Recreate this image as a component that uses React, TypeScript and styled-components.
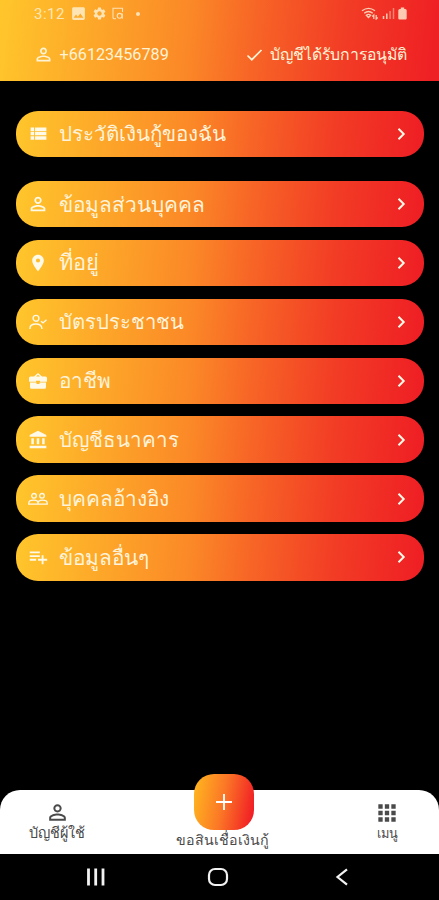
import React from "react";
import styled, { createGlobalStyle } from "styled-components";
import {
  MdAccountBalance,
  MdApps,
  MdImage,
  MdPersonOutline,
  MdPlace,
  MdPlaylistAdd,
  MdSettings,
  MdViewList,
} from "react-icons/md";

const gradient = "linear-gradient(96deg, #ffc62b 0%, #fb8827 43%, #f76426 58%, #f23c25 78%, #ef2024 98%)";

const GlobalStyle = createGlobalStyle`
  *, *::before, *::after { box-sizing: border-box; }
  html, body { margin: 0; background: #000; }
  body { font-family: Roboto, sans-serif; }
  svg { display: block; flex: none; }
`;

const Screen = styled.div`
  width: 439px;
  height: 900px;
  display: flex;
  flex-direction: column;
  overflow: hidden;
  background: #000;
`;

const Header = styled.header`
  height: 81px;
  background: ${gradient};
  color: #fff3d6;
`;

const StatusBar = styled.div`
  height: 27px;
  padding: 0 32px 0 34px;
  display: flex;
  align-items: center;
  justify-content: space-between;
  opacity: 0.8;
`;

const StatusGroup = styled.div<{ $gap: number }>`
  display: flex;
  align-items: center;
  gap: ${(p) => p.$gap}px;
`;

const Clock = styled.span`
  width: 31px;
  font-size: 15px;
  line-height: 18px;
  letter-spacing: 0.5px;
  white-space: nowrap;
`;

const Dot = styled.span`
  width: 4px;
  height: 4px;
  margin-left: 7px;
  border-radius: 50%;
  background: currentColor;
`;

const AccountBar = styled.div`
  height: 54px;
  padding: 1px 32px 0 33px;
  display: flex;
  align-items: center;
  justify-content: space-between;
`;

const AccountItem = styled.div<{ $size: number; $gap: number }>`
  display: flex;
  align-items: center;
  gap: ${(p) => p.$gap}px;
  font-size: ${(p) => p.$size}px;
  line-height: 22px;
  white-space: nowrap;
`;

const Content = styled.main`
  height: 692px;
  padding: 29.5px 15px 0 16px;
`;

const MenuGroup = styled.nav`
  display: grid;
  gap: 12.5px;
  margin-bottom: 24px;
`;

const MenuRow = styled.a`
  height: 46.4px;
  padding: 0 15px 0 12px;
  display: flex;
  align-items: center;
  border-radius: 22px;
  background: ${gradient};
  color: #fff9e8;
`;

const IconSlot = styled.span`
  width: 20px;
  display: flex;
  justify-content: center;
`;

const RowLabel = styled.span<{ $size: number }>`
  flex: 1;
  margin-left: 11px;
  padding-top: 1px;
  font-size: ${(p) => p.$size}px;
  line-height: 30px;
  color: #fff3d9;
  white-space: nowrap;
`;

const TabBar = styled.footer`
  height: 64px;
  margin-top: 16.5px;
  display: grid;
  grid-template-columns: 113px 1fr 104px;
  border-radius: 20px 20px 0 0;
  background: #fff;
  color: #4a4a4a;
`;

const Tab = styled.div`
  padding-top: 10px;
  display: flex;
  flex-direction: column;
  align-items: center;
`;

const UserTab = styled(Tab)`
  padding-left: 2px;
`;

const ActionTab = styled(Tab)`
  padding-top: 0;
  margin-top: -16px;
`;

const AddButton = styled.button`
  width: 60px;
  height: 56px;
  padding: 0;
  border: 0;
  border-radius: 20px;
  display: grid;
  place-items: center;
  background: linear-gradient(100deg, #ffb91f 0%, #fb7726 48%, #f11d25 95%);
  color: #fff;
`;

const TabLabel = styled.span<{ $size: number; $lift?: number; $pull?: number }>`
  margin-top: ${(p) => -(p.$lift ?? 0)}px;
  margin-right: ${(p) => p.$pull ?? 0}px;
  font-size: ${(p) => p.$size}px;
  line-height: 20px;
  white-space: nowrap;
`;

const SystemNav = styled.div`
  height: 46.5px;
  display: grid;
  grid-template-columns: 192px 52px 1fr;
  align-items: center;
  justify-items: center;
  padding-top: 1px;
  color: #f2f2f2;
`;

const Chevron = () => (
  <svg width="16" height="16" viewBox="0 0 16 16" fill="none" stroke="currentColor" strokeWidth="2">
    <path d="M5.5 2.8 10.7 8l-5.2 5.2" />
  </svg>
);

const CheckIcon = () => (
  <svg width="17" height="14" viewBox="0 0 16 14" fill="none" stroke="currentColor" strokeWidth="1.7">
    <path d="m1 7.5 4.3 4.2L15 2" />
  </svg>
);

const PersonCheckIcon = () => (
  <svg width="20" height="18" viewBox="0 0 20 18" fill="none" stroke="currentColor" strokeWidth="1.4">
    <circle cx="8" cy="5.3" r="2.9" />
    <path d="M2 16v-.7c0-2.800 2.500-4.300 6-4.300 3.300 0 5.600 1.500 5.900 4.300v.7M13 8.200l2 1.700 3.500-3.200" />
  </svg>
);

const PeopleIcon = () => (
  <svg width="20" height="16" viewBox="0 0 20 16" fill="none" stroke="currentColor" strokeWidth="1.3">
    <circle cx="6" cy="4.8" r="2.3" />
    <circle cx="14" cy="4.8" r="2.3" />
    <path d="M.8 13.200v-1.300C.8 10.100 3.200 9.200 5.700 9.200c2.100 0 4.300.8 4.300 2.700v1.300H.8ZM10 11.500c.4-1.500 2.100-2.300 4.200-2.300 2.500 0 5 .9 5 2.700v1.300H10" />
  </svg>
);

const BriefcaseIcon = () => (
  <svg width="20" height="18" viewBox="0 0 20 18">
    <path
      fill="currentColor"
      fillRule="evenodd"
      d="M6 4.500 10 1l4 3.500h3.500Q19 4.500 19 6v3.800h-7V8.800H8v1H1V6Q1 4.500 2.500 4.500H6Zm2 0h4L10 2.800 8 4.500ZM2 10.500h6.500V12h3v-1.500H18v4.700q0 1.500-1.500 1.500h-13q-1.500 0-1.500-1.500v-4.700Z"
    />
  </svg>
);

const DocumentIcon = () => (
  <svg width="12" height="13" viewBox="0 0 12 13" fill="none" stroke="currentColor" strokeWidth="1.1">
    <path d="M4 11.800H2.300Q1 11.800 1 10.500V1.200h9.500V5" />
    <circle cx="7.600" cy="8.800" r="2.400" />
    <path d="M10.300 6.400v5.400" />
  </svg>
);

const WifiIcon = () => (
  <svg width="18" height="13" viewBox="0 0 18 13" fill="none" stroke="currentColor" strokeWidth="1.300">
    <path d="M1 3.800Q7.500-1.200 14 3.800M3.200 6.200q4.300-3.400 8.600 0M5.300 8.300q2.200-1.800 4.400 0L7.500 10.500ZM12.800 12V8l-1.500 1.500M15.200 8v4l1.500-1.500" />
  </svg>
);

const SignalIcon = () => (
  <svg width="13" height="13" viewBox="0 0 13 13" fill="none" stroke="currentColor" strokeWidth="1.500">
    <path d="M1.500 9v3M4.800 6.500V12" />
    <path d="M8.100 4v8M11.500 1v11" opacity=".55" />
  </svg>
);

const BatteryIcon = () => (
  <svg width="9" height="13" viewBox="0 0 9 13" fill="currentColor">
    <path d="M2.800.5h3.400V2h1q1.500 0 1.500 1.500v7.800q0 1.200-1.200 1.200h-6Q.3 12.500.3 11.300V3.500Q.3 2 1.800 2h1Z" />
  </svg>
);

const PlusIcon = () => (
  <svg width="18" height="18" viewBox="0 0 18 18" fill="none" stroke="currentColor" strokeWidth="1.800">
    <path d="M9 1v16M1 9h16" />
  </svg>
);

const RecentsIcon = () => (
  <svg width="20" height="18" viewBox="0 0 20 18" fill="none" stroke="currentColor" strokeWidth="2.800">
    <path d="M2.500 .5v17M9.700 .5v17M17 .5v17" />
  </svg>
);

const HomeIcon = () => (
  <svg width="22" height="20" viewBox="0 0 22 20" fill="none" stroke="currentColor" strokeWidth="2.200">
    <rect x="2" y="2" width="18" height="16" rx="6" />
  </svg>
);

const BackIcon = () => (
  <svg width="14" height="18" viewBox="0 0 14 18" fill="none" stroke="currentColor" strokeWidth="2.200">
    <path d="M12 1.300 2.500 9 12 16.700" />
  </svg>
);

const historyItems = [{ label: "ประวัติเงินกู้ของฉัน", icon: <MdViewList size={21} />, size: 20.6 }];

const profileItems = [
  { label: "ข้อมูลส่วนบุคคล", icon: <MdPersonOutline size={22} />, size: 20.8 },
  { label: "ที่อยู่", icon: <MdPlace size={20} />, size: 21.8 },
  { label: "บัตรประชาชน", icon: <PersonCheckIcon />, size: 20.3 },
  { label: "อาชีพ", icon: <BriefcaseIcon />, size: 20.8 },
  { label: "บัญชีธนาคาร", icon: <MdAccountBalance size={20} />, size: 20.5 },
  { label: "บุคคลอ้างอิง", icon: <PeopleIcon />, size: 20.8 },
  { label: "ข้อมูลอื่นๆ", icon: <MdPlaylistAdd size={22} />, size: 20.8 },
];

type Item = (typeof profileItems)[number];

const Menu = ({ items }: { items: Item[] }) => (
  <MenuGroup>
    {items.map((item) => (
      <MenuRow key={item.label}>
        <IconSlot>{item.icon}</IconSlot>
        <RowLabel $size={item.size}>{item.label}</RowLabel>
        <Chevron />
      </MenuRow>
    ))}
  </MenuGroup>
);

export default function App() {
  return (
    <>
      <GlobalStyle />
      <Screen>
        <Header>
          <StatusBar>
            <StatusGroup $gap={5}>
              <Clock>3:12</Clock>
              <MdImage size={17} />
              <MdSettings size={15} />
              <DocumentIcon />
              <Dot />
            </StatusGroup>
            <StatusGroup $gap={3}>
              <WifiIcon />
              <SignalIcon />
              <BatteryIcon />
            </StatusGroup>
          </StatusBar>
          <AccountBar>
            <AccountItem $size={16.2} $gap={5.5}>
              <MdPersonOutline size={21} />
              +66123456789
            </AccountItem>
            <AccountItem $size={15.8} $gap={7}>
              <CheckIcon />
              บัญชีได้รับการอนุมัติ
            </AccountItem>
          </AccountBar>
        </Header>
        <Content>
          <Menu items={historyItems} />
          <Menu items={profileItems} />
        </Content>
        <TabBar>
          <UserTab>
            <MdPersonOutline size={25} />
            <TabLabel $size={14.5} $lift={1} $pull={2}>บัญชีผู้ใช้</TabLabel>
          </UserTab>
          <ActionTab>
            <AddButton aria-label="ขอสินเชื่อเงินกู้">
              <PlusIcon />
            </AddButton>
            <TabLabel $size={14.2} $pull={4}>ขอสินเชื่อเงินกู้</TabLabel>
          </ActionTab>
          <Tab>
            <MdApps size={26} />
            <TabLabel $size={12.8} $lift={2}>เมนู</TabLabel>
          </Tab>
        </TabBar>
        <SystemNav>
          <RecentsIcon />
          <HomeIcon />
          <BackIcon />
        </SystemNav>
      </Screen>
    </>
  );
}
